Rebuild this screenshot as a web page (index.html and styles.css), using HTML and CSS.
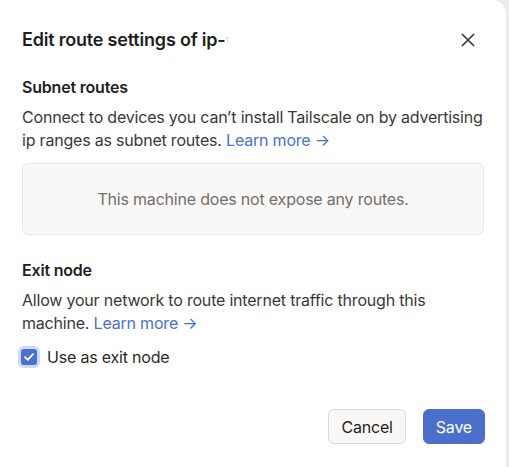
FILE: index.html
```html
<!DOCTYPE html>
<html lang="en">
<head>
    <meta charset="UTF-8">
    <meta name="viewport" content="width=device-width, initial-scale=1.0">
    <title>Edit route settings</title>
    <link rel="stylesheet" href="styles.css">
</head>
<body>
    <div class="dialog">
        <header class="dialogHeader">
            <h2>Edit route settings of ip-<span class="fade">1</span></h2>
            <button class="closeBtn" aria-label="Close">
                <svg width="14" height="14" viewBox="0 0 14 14">
                    <path d="M1.5 1.5 L12.5 12.5 M12.5 1.5 L1.5 12.5" stroke="#3a3938" stroke-width="1.7" stroke-linecap="round" fill="none"/>
                </svg>
            </button>
        </header>

        <section class="section">
            <h3>Subnet routes</h3>
            <p>Connect to devices you can’t install Tailscale on by advertising ip ranges as subnet routes. <a href="#">Learn more →</a></p>
            <div class="emptyBox">This machine does not expose any routes.</div>
        </section>

        <section class="section">
            <h3>Exit node</h3>
            <p class="narrow">Allow your network to route internet traffic through this machine. <a href="#">Learn more →</a></p>
            <label class="checkRow">
                <span class="checkBox">
                    <svg width="10" height="8" viewBox="0 0 10 8">
                        <path d="M1 4.2 L3.7 6.8 L9 1.2" stroke="#fff" stroke-width="1.8" fill="none" stroke-linecap="round" stroke-linejoin="round"/>
                    </svg>
                </span>
                Use as exit node
            </label>
        </section>

        <footer class="dialogFooter">
            <button class="btn btnCancel">Cancel</button>
            <button class="btn btnSave">Save</button>
        </footer>
    </div>
</body>
</html>
```

FILE: styles.css
```css
* {
    margin: 0;
    padding: 0;
    box-sizing: border-box;
}

body {
    background-color: #ececec;
    font-family: Inter, "Noto Sans", sans-serif;
    color: #3a3836;
    letter-spacing: -0.2px;
}

.dialog {
    background-color: #fff;
    width: 506px;
    min-height: 480px;
    border-radius: 0 14px 0 0;
    padding: 26px 22px 24px 22px;
}

.dialogHeader {
    display: flex;
    justify-content: space-between;
    align-items: center;
    height: 28px;
}

.dialogHeader h2 {
    font-size: 18px;
    font-weight: 600;
    color: #1f1e1d;
    line-height: 28px;
    letter-spacing: -0.2px;
}

.fade {
    color: #f6d8a8;
    font-size: 8px;
    vertical-align: top;
}

.closeBtn {
    background: none;
    border: none;
    width: 28px;
    height: 28px;
    display: flex;
    align-items: center;
    justify-content: center;
    margin-right: 2px;
}

.section {
    margin-top: 21px;
}

.section + .section {
    margin-top: 23px;
}

.section h3 {
    font-size: 16px;
    font-weight: 600;
    color: #1f1e1d;
    line-height: 24px;
}

.section p {
    font-size: 16px;
    line-height: 23px;
    margin-top: 7px;
}

.section p.narrow {
    padding-right: 40px;
}

a {
    color: #4b70cc;
    text-decoration: none;
}

.emptyBox {
    margin-top: 11px;
    height: 72px;
    background-color: #f9f8f7;
    border: 1px solid #e9e7e4;
    border-radius: 6px;
    display: flex;
    align-items: center;
    justify-content: center;
    color: #716f6c;
    font-size: 16px;
}

.checkRow {
    display: flex;
    align-items: center;
    gap: 10px;
    margin-top: 10px;
    font-size: 16px;
    line-height: 24px;
    color: #2a2927;
}

.checkBox {
    width: 16px;
    height: 16px;
    margin-left: -1px;
    border-radius: 3px;
    background-color: #4b70cc;
    box-shadow: 0 0 0 3px #cbdaf7;
    display: flex;
    align-items: center;
    justify-content: center;
}

.dialogFooter {
    display: flex;
    justify-content: flex-end;
    gap: 17px;
    margin-top: 40px;
    margin-right: -1px;
}

.btn {
    font-family: Inter, "Noto Sans", sans-serif;
    font-size: 16px;
    letter-spacing: -0.2px;
    height: 35px;
    border-radius: 6px;
    padding: 0 12px;
}

.btnCancel {
    background-color: #f9f8f7;
    border: 1px solid #dcd9d6;
    color: #1f1e1d;
}

.btnSave {
    background-color: #4b70cc;
    border: 1px solid #4b70cc;
    color: #fff;
}
```
